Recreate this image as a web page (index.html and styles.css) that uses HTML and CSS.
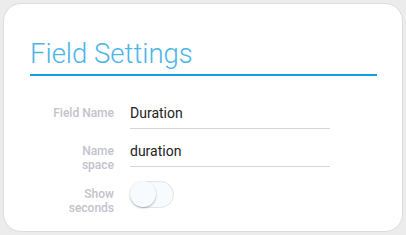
FILE: index.html
```html
<!DOCTYPE html>
<html lang="en">

<head>
    <meta charset="UTF-8">
    <meta name="viewport" content="width=device-width, initial-scale=1.0">
    <title>Field Settings</title>
    <link rel="stylesheet" href="styles.css">
</head>

<body>
    <section class="card">
        <h2 class="title">Field Settings</h2>

        <div class="form">
            <div class="row">
                <label class="label">Field Name</label>
                <div class="value">Duration</div>
            </div>

            <div class="row">
                <label class="label">Name<br>space</label>
                <div class="value">duration</div>
            </div>

            <div class="row switch-row">
                <label class="label">Show<br>seconds</label>
                <div class="toggle">
                    <span class="knob"></span>
                </div>
            </div>
        </div>
    </section>
</body>

</html>
```

FILE: styles.css
```css
html,
body {
    margin: 0;
    padding: 0;
}

body {
    background: #ececec;
    font-family: Roboto, "Liberation Sans", sans-serif;
    padding: 3px;
    width: 400px;
    height: 229px;
}

.card {
    box-sizing: border-box;
    width: 400px;
    height: 229px;
    background: #fff;
    border: 1px solid #dcdcdc;
    border-radius: 18px;
    padding: 30px 25px 0 26px;
}

.title {
    margin: 0;
    font-size: 27.5px;
    font-weight: 300;
    line-height: 40px;
    color: #4bb5e6;
    border-bottom: 2px solid #12a0de;
    height: 40px;
}

.form {
    margin-top: 25px;
    width: 300px;
}

.row {
    display: flex;
    align-items: flex-start;
    height: 38px;
}

.switch-row {
    margin-top: 4px;
}

.label {
    width: 84px;
    flex: none;
    text-align: right;
    font-size: 12px;
    font-weight: 500;
    line-height: 14px;
    color: #c2c2cc;
    padding: 5px 16px 0 0;
}

.switch-row .label {
    padding-top: 6px;
}

.value {
    flex: 1;
    font-size: 14px;
    color: #222;
    line-height: 20px;
    padding: 2px 0 5px;
    border-bottom: 1px solid #d6d6d6;
}

.toggle {
    position: relative;
    box-sizing: border-box;
    width: 44px;
    height: 27px;
    border: 1px solid #e2e4e6;
    border-radius: 14px;
    background: #f7fbfd;
}

.knob {
    position: absolute;
    left: -1px;
    top: -1px;
    width: 26px;
    height: 26px;
    border-radius: 50%;
    background: #f8fbfd;
    box-shadow: 0 1px 2px rgba(0, 0, 0, .3);
}
```
